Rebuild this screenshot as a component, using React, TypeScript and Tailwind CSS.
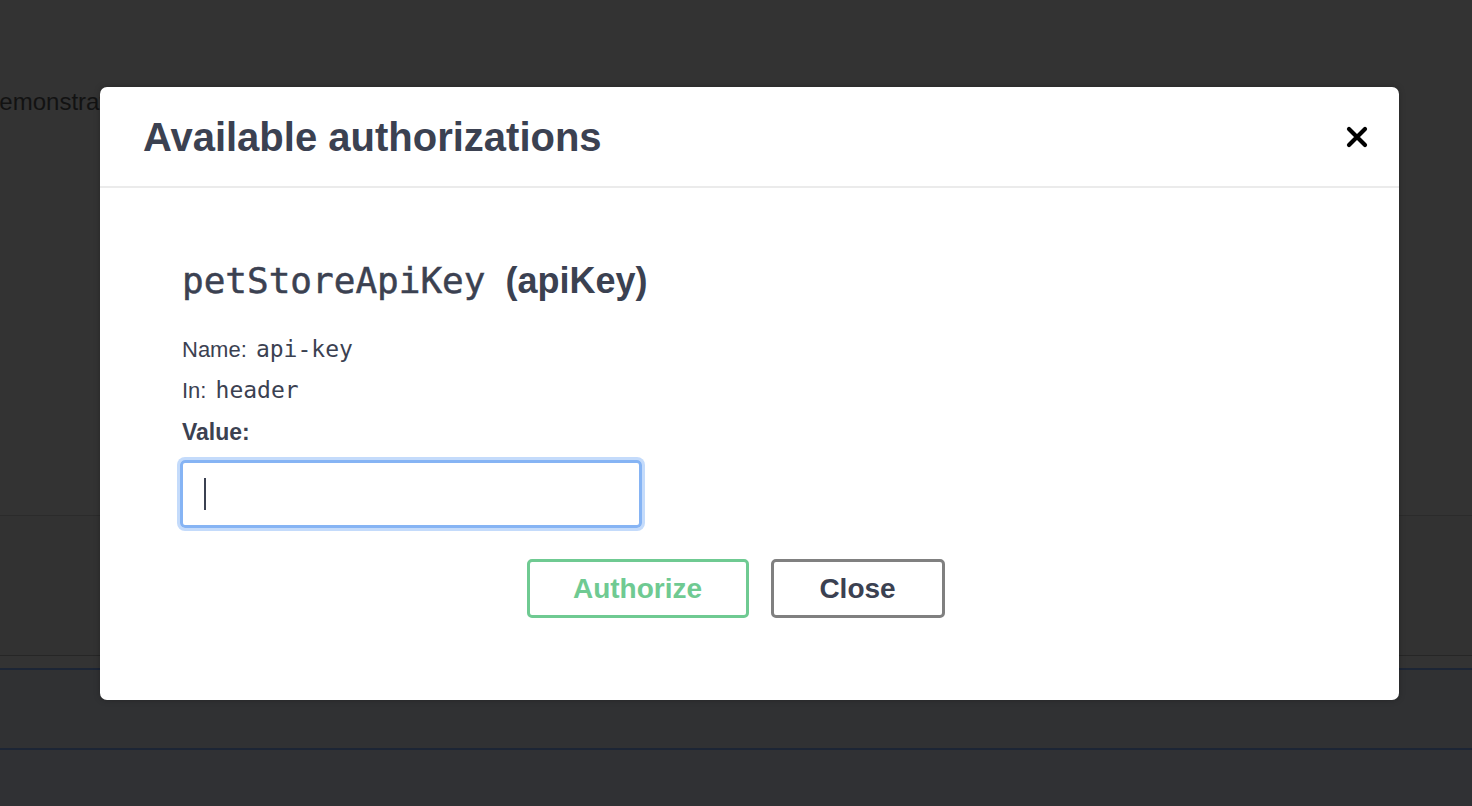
import React from 'react';

const SANS = "font-['Liberation_Sans',Arial,sans-serif]";
const MONO = "font-['DejaVu_Sans_Mono',monospace]";

const CloseIcon = () => (
    <svg width="22" height="22" viewBox="0 0 22 22" aria-hidden="true">
        <path d="M3 3 L19 19 M19 3 L3 19" stroke="#000" strokeWidth="4.2" strokeLinecap="round" />
    </svg>
);

const Backdrop = () => (
    <div className="flex flex-col h-full">
        <div className="h-[515px] bg-[#333333] pt-[84px]">
            <p className={`${SANS} text-[24px] text-[#121212] ml-[-14px] whitespace-nowrap`}>demonstrate</p>
        </div>
        <div className="h-px bg-[#2b2b2b]" />
        <div className="h-[139px] bg-[#323232]" />
        <div className="h-px bg-[#262626]" />
        <div className="h-[12px] bg-[#333333]" />
        <div className="h-[2px] bg-[#1c2535]" />
        <div className="h-[78px] bg-[#303133]" />
        <div className="h-[2px] bg-[#1c2535]" />
        <div className="flex-1 bg-[#303134]" />
    </div>
);

export default function App() {
    return (
        <div className={`relative w-[1472px] h-[806px] overflow-hidden ${SANS}`}>
            <Backdrop />

            {/* modal */}
            <div className="absolute left-[100px] top-[87px] w-[1299px] h-[613px] bg-white rounded-[7px] shadow-[0_0_6px_rgba(0,0,0,0.25)] flex flex-col">
                <div className="h-[101px] flex items-center justify-between pl-[43px] pr-[31px] border-b-2 border-[#ebebeb]">
                    <h3 className="text-[40px] font-bold text-[#3b4151]">Available authorizations</h3>
                    <button className="flex items-center justify-center"><CloseIcon /></button>
                </div>

                <div className="pl-[82px] pr-[82px] pt-[65px]">
                    <h4 className="flex items-baseline gap-[20px] leading-[56px] text-[#3b4151]">
                        <code className={`${MONO} text-[36px] [-webkit-text-stroke:0.5px_#3b4151]`}>petStoreApiKey</code>
                        <span className="text-[36px] font-bold">(apiKey)</span>
                    </h4>

                    <div className="mt-[20px] flex flex-col text-[22px] text-[#3b4151]">
                        <p className="leading-[41px]">Name: <code className={`${MONO} text-[23px] ml-[3px]`}>api-key</code></p>
                        <p className="leading-[41px]">In: <code className={`${MONO} text-[23px] ml-[3px]`}>header</code></p>
                        <label className="leading-[43px] font-bold text-[23px]">Value:</label>
                    </div>

                    <div className="mt-[6px] -ml-[2px] w-[462px] h-[68px] rounded-[5px] border-[3px] border-[#86b4f4] ring-[3px] ring-[#c4dbfb] flex items-center pl-[21px]">
                        <span className="w-[2px] h-[32px] bg-[#3b4151]" />
                    </div>

                    <div className="mt-[31px] flex justify-center gap-[22px] pr-[28px]">
                        <button className="w-[222px] h-[59px] rounded-[5px] border-[3px] border-[#6fca92] text-[28px] font-bold text-[#6fca92]">Authorize</button>
                        <button className="w-[174px] h-[59px] rounded-[5px] border-[3px] border-[#808080] text-[28px] font-bold text-[#3b4151]">Close</button>
                    </div>
                </div>
            </div>
        </div>
    );
}
